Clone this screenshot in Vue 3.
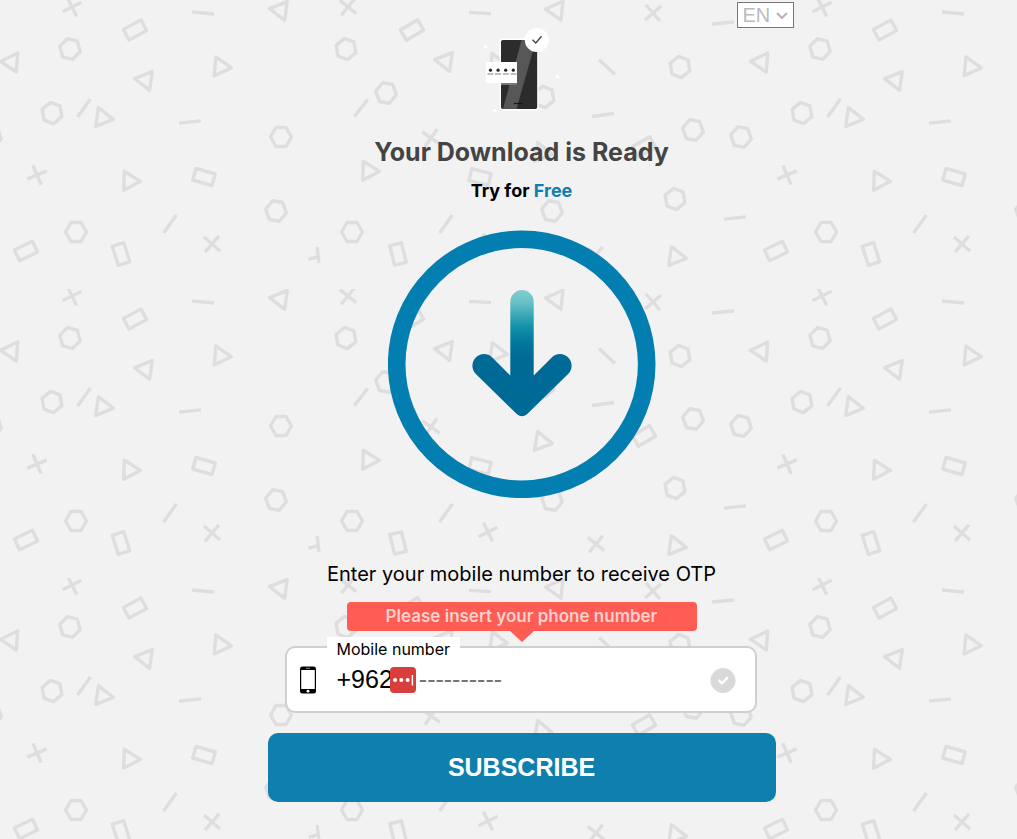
<script setup>
import { ref } from 'vue'

const phone = ref('')
const language = ref('EN')

// Background confetti, one 750 x 289 tile: [kind, x, y, rotation]
const shapes = [
  ['cross', 72, 7, 15], ['rect', 135, 30, -28], ['line', 203, 13, 5], ['hex', 70, 49, 15],
  ['tri', 10, 62, 184], ['tri', 760, 62, 184], ['tri', 144, 80, 188], ['tri', 222, 67, 5],
  ['hex', 52, 113, 20], ['line', 84, 108, -54], ['tri', 104, 118, 8], ['line', 190, 122, -6],
  ['cross', 37, 175, 18], ['tri', 131, 181, 2], ['rect', 204, 177, 16], ['hex', 76, 232, 0],
  ['line', 170, 224, -54], ['cross', 212, 244, -8], ['rect', 26, 251, -26], ['rect', 121, 254, 72],
  ['tri', 279, 10, 188], ['cross', 348, 7, -10], ['line', 480, 13, 3], ['rect', 412, 30, -30],
  ['hex', 346, 49, 20], ['tri', 444, 61, 188], ['hex', 386, 93, 10], ['line', 361, 108, -52],
  ['hex', 281, 137, 0], ['cross', 431, 138, -14], ['tri', 370, 171, 2], ['rect', 480, 177, 14],
  ['hex', 276, 211, 10], ['hex', 352, 232, 0], ['line', 446, 224, -54], ['halfcross', 316, 255, 15],
  ['rect', 398, 254, 76], ['tri', 498, 64, 8], ['cross', 488, 243, 15], ['tri', 555, 10, 186],
  ['cross', 653, 13, 0], ['line', 723, 23, -5], ['hex', 680, 67, 20], ['line', 607, 67, 43],
  ['line', 603, 115, -8], ['hex', 544, 97, 20], ['hex', 693, 130, 10], ['hex', 741, 137, 12],
  ['hex', -9, 137, 12], ['rect', 644, 147, -30], ['tri', 543, 153, 10], ['hex', 675, 199, 20],
  ['hex', 552, 211, 10], ['line', 735, 218, -6], ['tri', 677, 257, 8], ['cross', 596, 255, -10]
]

const outlines = {
  cross: 'M-7 -8L7 8M8 -7L-8 7',
  halfcross: 'M-1 -8L5 7M4 0L-6 6',
  rect: 'M-10 -6H10V6H-10Z',
  line: 'M-11 0H11',
  hex: 'M-10.5 0L-5 -9.5H5L10.5 0L5 9.5H-5Z',
  tri: 'M-7 -9.5L9.5 0L-7 9.5Z'
}
</script>

<template>
  <div class="page">
    <svg class="confetti" aria-hidden="true">
      <defs>
        <pattern id="confetti-tile" width="750" height="289" patternUnits="userSpaceOnUse">
          <g class="confetti-shapes">
            <path
              v-for="([kind, x, y, turn], i) in shapes"
              :key="i"
              :d="outlines[kind]"
              :transform="`translate(${x} ${y}) rotate(${turn})`"
              fill="none"
              stroke="#dfddde"
              stroke-width="3.4"
            />
          </g>
        </pattern>
      </defs>
      <rect width="100%" height="100%" fill="url(#confetti-tile)" />
    </svg>

    <main class="content">
      <header class="topbar">
        <div class="language">
          <select v-model="language" aria-label="Language">
            <option>EN</option>
            <option>AR</option>
          </select>
          <svg class="chevron" viewBox="0 0 12 8" aria-hidden="true">
            <path d="M1 1L6 6L11 1" fill="none" stroke="#b5b5b5" stroke-width="2" />
          </svg>
        </div>
      </header>

      <svg class="hero" viewBox="0 0 80 84" aria-hidden="true">
        <g fill="#fff">
          <circle cx="3.5" cy="19" r="1.8" />
          <circle cx="75.5" cy="48.5" r="1.6" />
          <circle cx="12.5" cy="82.3" r="1.6" />
        </g>
        <rect x="18.3" y="11.3" width="37.6" height="70.4" rx="2.5" fill="#2c2c2c" stroke="#fff" stroke-width="1.4" />
        <path d="M39.5 12H54L34.5 81H21Z" fill="#575757" />
        <path d="M32 75.5H41" stroke="#161616" stroke-width="1.2" />
        <path d="M19 55H35V57H19Z" fill="#777" />
        <rect x="4" y="34" width="31" height="21" fill="#fff" />
        <g fill="#242424">
          <circle v-for="n in 4" :key="n" :cx="0.9 + n * 7.6" cy="42.2" r="1.6" />
        </g>
        <path d="M5.5 46H11.5M13 46H19M20.8 46H26.8M28.5 46H34.5" stroke="#aaa" stroke-width="1.6" />
        <circle cx="54.8" cy="12" r="12" fill="#fff" />
        <path d="M50.5 11.8L53.8 15L59.5 8.3" fill="none" stroke="#444" stroke-width="1.4" />
      </svg>

      <h1>Your Download is Ready</h1>
      <p class="tagline">Try for <span>Free</span></p>

      <svg class="download" viewBox="0 0 268 268" aria-hidden="true">
        <defs>
          <linearGradient id="shaft" x1="0" y1="60" x2="0" y2="186" gradientUnits="userSpaceOnUse">
            <stop offset="0" stop-color="#83cdd2" />
            <stop offset="0.1" stop-color="#68c0c7" />
            <stop offset="0.28" stop-color="#1594ac" />
            <stop offset="0.4" stop-color="#037a9e" />
            <stop offset="0.53" stop-color="#006a96" />
            <stop offset="1" stop-color="#006a96" />
          </linearGradient>
        </defs>
        <circle cx="133.7" cy="134.3" r="125" fill="none" stroke="#037eb0" stroke-width="17.6" />
        <path
          d="M122.3 71.7A11.7 11.7 0 0 1 145.7 71.7V145.5L164 127.3A11.6 11.6 0 0 1 180.4 143.7L139 184.3Q134 188.3 129 184.3L87.6 143.7A11.6 11.6 0 0 1 104 127.3L122.3 145.5Z"
          fill="url(#shaft)"
        />
      </svg>

      <p class="prompt">Enter your mobile number to receive OTP</p>
      <p id="phone-error" class="alert" role="alert">Please insert your phone number</p>

      <form @submit.prevent>
        <div class="field">
          <label for="phone">Mobile number</label>
          <svg class="handset" viewBox="0 0 16 28" aria-hidden="true">
            <rect width="16" height="27" y="0.5" rx="2.5" />
            <path d="M1.2 4H14.8V23H1.2Z" fill="#fff" />
            <path d="M6 2.3H10" stroke="#aaa" stroke-width="0.8" />
            <circle cx="8" cy="25.2" r="1.4" fill="#fff" />
          </svg>
          <span class="prefix">+962</span>
          <svg class="autofill" viewBox="0 0 26 26" aria-hidden="true">
            <rect width="26" height="26" rx="4" fill="#d83f3c" />
            <g fill="#fff">
              <circle cx="5" cy="13" r="2" />
              <circle cx="11.3" cy="13" r="2" />
              <circle cx="17.6" cy="13" r="2" />
              <rect x="21.7" y="8" width="1.4" height="10.5" />
            </g>
          </svg>
          <input id="phone" v-model="phone" type="tel" placeholder="----------" aria-describedby="phone-error" />
          <svg class="valid" viewBox="0 0 26 26" aria-hidden="true">
            <circle cx="13" cy="13.5" r="12.5" fill="#d9d9d9" />
            <path d="M9.2 13.7L12 16.3L17 11.1" fill="none" stroke="#fff" stroke-width="2.4" stroke-linecap="round" stroke-linejoin="round" />
          </svg>
        </div>
        <button type="submit">SUBSCRIBE</button>
      </form>
    </main>
  </div>
</template>

<style>
body {
  background: #f2f2f2;
}
</style>

<style scoped>
.page {
  position: relative;
  box-sizing: border-box;
  min-height: 100vh;
  padding-left: 26px;
  font-family: Inter, "Liberation Sans", sans-serif;
  color: #000;
}

.confetti {
  position: absolute;
  inset: 0;
  width: 100%;
  height: 100%;
}

.confetti-shapes {
  stroke-linejoin: round;
}

.content {
  position: relative;
  display: flex;
  flex-direction: column;
  align-items: center;
  width: 508px;
  max-width: 100%;
  margin: 0 auto;
}

.topbar {
  display: flex;
  justify-content: flex-end;
  align-self: stretch;
  margin: 0 -18px;
  padding-top: 2px;
}

.language {
  position: relative;
}

.language select {
  display: block;
  box-sizing: border-box;
  width: 57px;
  height: 26px;
  padding: 0 5px;
  appearance: none;
  border: 1px solid #767676;
  border-radius: 0;
  background: #fff;
  color: #bbb;
  font: 20px "Liberation Sans", Arial, sans-serif;
}

.chevron {
  position: absolute;
  top: 10px;
  right: 6px;
  width: 12px;
  height: 8px;
  pointer-events: none;
}

.hero {
  width: 80px;
  height: 84px;
}

h1 {
  margin: 24px 0 0;
  color: #444;
  font-size: 25px;
  font-weight: 700;
  line-height: 32px;
}

.tagline {
  margin: 11px 0 0;
  font-size: 18px;
  font-weight: 700;
  line-height: 24px;
}

.tagline span {
  color: #0f7fad;
}

.download {
  width: 268px;
  height: 268px;
  margin-top: 27px;
}

.prompt {
  margin: 64px 0 0;
  font-size: 20px;
  line-height: 24px;
}

.alert {
  position: relative;
  box-sizing: border-box;
  width: 350px;
  max-width: 100%;
  margin: 16px 0 15px;
  border-radius: 4px;
  background: #ff5c54;
  color: #fbd0cd;
  font-size: 17px;
  font-weight: 600;
  line-height: 29px;
  text-align: center;
}

.alert::after {
  content: "";
  position: absolute;
  top: 100%;
  left: 50%;
  margin-left: -12px;
  border: 12px solid transparent;
  border-top: 11px solid #ff5c54;
  border-bottom: 0;
}

form {
  align-self: stretch;
}

.field {
  position: relative;
  display: flex;
  align-items: center;
  box-sizing: border-box;
  height: 67px;
  margin: 0 19px 0 17px;
  padding: 0 19px 0 13px;
  border: 2px solid #cfcfcf;
  border-radius: 10px;
  background: #fff;
}

.field label {
  position: absolute;
  top: -11px;
  left: 40px;
  padding: 0 10px;
  background: #fff;
  font-size: 16px;
  line-height: 25px;
}

.handset {
  flex: none;
  width: 16px;
  height: 28px;
  margin-right: 21px;
}

.prefix,
.field input {
  font: 25px "Liberation Sans", Arial, sans-serif;
}

.autofill {
  flex: none;
  width: 26px;
  height: 26px;
  margin: 0 3px 0 -3px;
}

.field input {
  flex: 1;
  min-width: 0;
  padding: 0;
  border: 0;
  outline: 0;
  background: none;
}

.field input::placeholder {
  color: #757575;
}

.valid {
  flex: none;
  width: 26px;
  height: 26px;
}

button {
  display: block;
  width: 100%;
  height: 69px;
  margin-top: 20px;
  border: 0;
  border-radius: 10px;
  background: #0f7fad;
  color: #fff;
  font: bold 25px "Liberation Sans", Arial, sans-serif;
  cursor: pointer;
}
</style>
